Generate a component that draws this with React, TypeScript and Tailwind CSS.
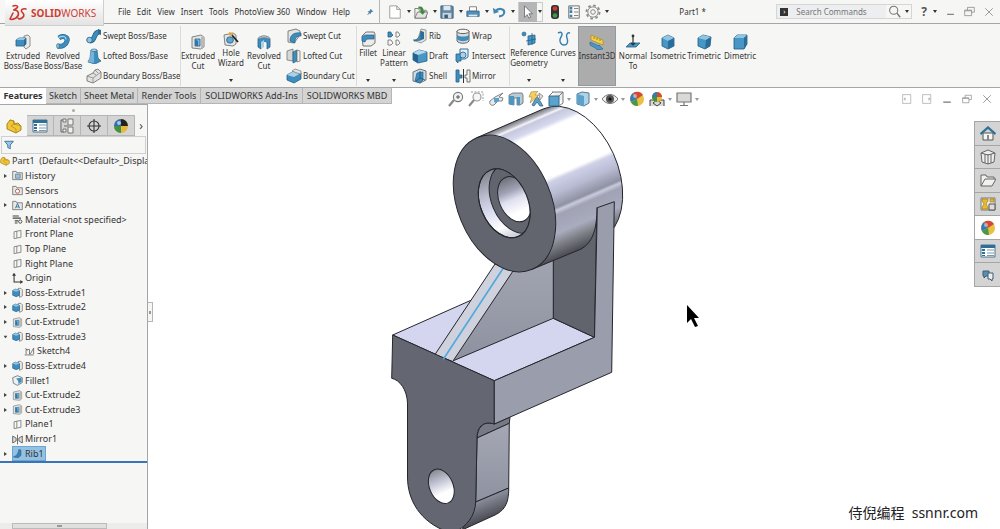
import type { ReactNode } from "react";

const ICONS: Record<string, ReactNode> = {
  extrude: (
    <>
      <path d="M9 2l4-1 2 2v9l-4 3-2-2z" fill="#e9e9e7" stroke="#777" strokeWidth=".8" />
      <path d="M1 6l3-2h7v6l-2 2H1z" fill="#3f8dbd" stroke="#24608a" strokeWidth=".8" />
      <path d="M1 6l3-2h7L9 6z" fill="#8fc4e2" />
      <path d="M9 6v6l2-2V4z" fill="#2b6d9a" />
    </>
  ),
  revolve: (
    <>
      <path d="M4 4c4-3 9-1 8 3s-5 6-9 5" fill="none" stroke="#22618c" strokeWidth="5" />
      <path d="M4 4c4-3 9-1 8 3s-5 6-9 5" fill="none" stroke="#3f8dbd" strokeWidth="3.8" />
      <path d="M4 3.4c4-2 7-1 7 2" fill="none" stroke="#a5d1ea" strokeWidth="1.2" />
      <ellipse cx="3" cy="12" rx="1.4" ry="2.4" fill="#8fc4e2" stroke="#22618c" strokeWidth=".6" />
    </>
  ),
  sweep: (
    <>
      <path d="M4 13c6 0 3-9 9-9" fill="none" stroke="#1f5a85" strokeWidth="5" />
      <path d="M4 13c6 0 3-9 9-9" fill="none" stroke="#3f8dbd" strokeWidth="3.6" />
      <circle cx="3.5" cy="12" r="2.8" fill="#8fc4e2" stroke="#1f5a85" strokeWidth=".8" />
      <path d="M12 1l3 1v5l-3-1z" fill="#2b6d9a" />
    </>
  ),
  loft: (
    <>
      <path d="M5 2h6l1 8 3 3-6 3-7-2 2-4z" fill="#3f8dbd" stroke="#24608a" strokeWidth=".7" />
      <path d="M5 2h3v13l-6-1 2-4z" fill="#76b3d6" />
      <ellipse cx="8" cy="2.3" rx="3" ry="1.3" fill="#a9d2e9" stroke="#24608a" strokeWidth=".6" />
    </>
  ),
  boundary: (
    <>
      <path d="M1 8l6-3 2-3 3-1 3 3v6l-8 5-6-2z" fill="#e2e2e0" stroke="#777" strokeWidth=".9" />
      <path d="M1 8l6 2 8-6M7 10v5M7 5l3 2M9 2l3 3" fill="none" stroke="#888" strokeWidth=".8" />
    </>
  ),
  cut: (
    <>
      <path d="M2 3l9-2 3 2v10l-3 2-9-1z" fill="#e4e4e2" stroke="#777" strokeWidth=".9" />
      <path d="M11 3l3-1v11l-3 2z" fill="#b9b9b7" />
      <path d="M5 5h5v7H5z" fill="#7db9dc" stroke="#24608a" strokeWidth=".8" />
      <path d="M5 5l3 2v5H5z" fill="#2e78a8" />
    </>
  ),
  hole: (
    <>
      <path d="M1 4l9-2 3 2v9l-3 2-8-1z" fill="#e4e4e2" stroke="#777" strokeWidth=".9" />
      <ellipse cx="7" cy="9" rx="3.4" ry="3.2" fill="#5fa8d1" stroke="#24608a" strokeWidth=".8" />
      <path d="M8 3l7 8" stroke="#222" strokeWidth="1.8" />
      <path d="M6 1l4 1-1 3-3-1z" fill="#e9a53a" />
    </>
  ),
  revcut: (
    <>
      <path d="M2 5c1-4 11-4 12 0v8l-3 2V9c0-2-5-2-6 0v6l-3-2z" fill="#3f8dbd" stroke="#24608a" strokeWidth=".8" />
      <path d="M2 5c1-4 11-4 12 0-3-2-9-2-12 0z" fill="#e6e6e4" stroke="#888" strokeWidth=".7" />
      <path d="M5 15V8l3-2v7z" fill="#a9d2e9" />
    </>
  ),
  sweptcut: (
    <>
      <path d="M2 3l8-2 4 2v4l-6 8-6-1z" fill="#e4e4e2" stroke="#777" strokeWidth=".9" />
      <path d="M4 13c0-6 4-9 11-8v3c-5 0-6 2-6 7z" fill="#3f8dbd" stroke="#24608a" strokeWidth=".7" />
    </>
  ),
  loftcut: (
    <>
      <path d="M1 3l6-2v12l-6-1z" fill="#d7d7d5" stroke="#777" strokeWidth=".8" />
      <path d="M7 4l4-2v11l-4 2z" fill="#3f8dbd" stroke="#24608a" strokeWidth=".7" />
      <path d="M11 2l3 1v10l-3 1z" fill="#efefed" stroke="#777" strokeWidth=".8" />
    </>
  ),
  boundcut: (
    <>
      <path d="M1 7l7-4 7 2v6l-7 4-7-3z" fill="#3f8dbd" stroke="#24608a" strokeWidth=".8" />
      <path d="M1 7l7-4 7 2-7 4z" fill="#a9d2e9" />
      <path d="M6 3l3-2 6 2v3l-4-1z" fill="#e4e4e2" stroke="#777" strokeWidth=".7" />
    </>
  ),
  fillet: (
    <>
      <path d="M2 5l4-4h8l1 2v9l-4 3H3z" fill="#ecece9" stroke="#666" strokeWidth=".9" />
      <path d="M2 8c0-3 2-4 4-4h8v4H9c-3 0-3 1-4 3l-3-1z" fill="#3f8dbd" stroke="#24608a" strokeWidth=".7" />
    </>
  ),
  pattern: (
    <>
      <path d="M2 1h3v1l2 2-2 2H2z" fill="#3f8dbd" stroke="#24608a" strokeWidth=".8" />
      <path d="M10 1h2l2 3-2 2h-2zM2 9h3l2 3-2 2H2zM10 9h2l2 3-2 2h-2z" fill="#f8f8f7" stroke="#777" strokeWidth=".9" />
    </>
  ),
  rib: (
    <>
      <path d="M9 1l5 1v10l-5 3-8-3 5-1z" fill="#e1e1df" stroke="#888" strokeWidth=".8" />
      <path d="M9 3v9l-7 1c4-2 6-4 7-10z" fill="#3f8dbd" stroke="#24608a" strokeWidth=".7" />
      <path d="M9 3l3 1v7l-3 1z" fill="#2b6d9a" />
    </>
  ),
  draft: (
    <>
      <path d="M1 5l6-3 8 2v9l-9 2-5-3z" fill="#4796c4" stroke="#24608a" strokeWidth=".8" />
      <path d="M1 5l6-3 8 2-9 3z" fill="#b5d8ec" />
      <path d="M1 5l5 2v8l-5-3z" fill="#26648f" />
    </>
  ),
  shell: (
    <>
      <path d="M1 4l7-3 6 2v9l-6 3-7-2z" fill="#c9dbe6" stroke="#666" strokeWidth=".9" />
      <path d="M5 5l6-1v8l-3 3-5-2z" fill="#3f8dbd" stroke="#24608a" strokeWidth=".7" />
      <path d="M8 3v7l5 2M8 10l-4 3" stroke="#1f4f72" strokeWidth=".8" fill="none" />
    </>
  ),
  wrap: (
    <>
      <path d="M2 3v10c2 3 10 3 12 0V3z" fill="#dcdcda" stroke="#555" strokeWidth=".9" />
      <path d="M2 7c3 2 9 2 12 0v4c-3 3-9 3-12 0z" fill="#3f8dbd" />
      <ellipse cx="8" cy="3.4" rx="6" ry="2.2" fill="#f3f3f1" stroke="#555" strokeWidth=".9" />
    </>
  ),
  intersect: (
    <>
      <path d="M5 1h8v8l-3 2H5z" fill="#e8f1f7" stroke="#2f6f9b" strokeWidth="1" />
      <path d="M1 6h5v7H3v2l-2-2z" fill="#4796c4" stroke="#24608a" strokeWidth=".8" />
      <circle cx="8" cy="7" r="3" fill="#a9d2e9" stroke="#24608a" strokeWidth=".8" />
    </>
  ),
  mirror: (
    <>
      <path d="M1 2h3v5h3v3H4v4H1z" fill="#3f8dbd" stroke="#24608a" strokeWidth=".8" />
      <path d="M8.500 1v14" stroke="#333" strokeWidth="1" />
      <path d="M15 2h-3v5h-2v3h2v4h3z" fill="#f4f4f2" stroke="#666" strokeWidth=".9" />
    </>
  ),
  refgeo: (
    <>
      <path d="M7 5l7-1v8l-7 2z" fill="#4796c4" stroke="#24608a" strokeWidth=".8" />
      <path d="M11 2v12M5 10l10-2" stroke="#24608a" strokeWidth=".8" />
      <circle cx="3" cy="3" r="2" fill="#3f8dbd" stroke="#24608a" strokeWidth=".6" />
    </>
  ),
  curves: <path d="M3 2c4-2 5 1 3 4s-1 8 3 8 4-4 3-7 0-6 3-5" fill="none" stroke="#3580b0" strokeWidth="1.4" />,
  instant: (
    <>
      <path d="M2 1l12 5v5L2 6z" fill="#f2d14b" stroke="#a98b1d" strokeWidth=".7" />
      <path d="M5 3v2M8 4v2M11 5v2" stroke="#8a6d10" strokeWidth=".8" />
      <path d="M1 8l9 4v-1l4 4-6 1v-1L1 11z" fill="#4b97c8" stroke="#24608a" strokeWidth=".6" />
    </>
  ),
  normal: (
    <>
      <path d="M1 13l4-4h10l-4 4z" fill="#4796c4" stroke="#24608a" strokeWidth=".8" />
      <path d="M8 2v9M6 9l2 2 2-2" stroke="#333" strokeWidth="1.2" fill="none" />
      <circle cx="8" cy="2" r="1.4" fill="#333" />
    </>
  ),
  iso: (
    <>
      <path d="M8 1l6 3v8l-6 3-6-3V4z" fill="#4796c4" stroke="#1f5a85" strokeWidth=".8" />
      <path d="M8 1l6 3-6 3-6-3z" fill="#8fc4e2" />
      <path d="M8 7l6-3v8l-6 3z" fill="#2b6d9a" />
    </>
  ),
  tri: (
    <>
      <path d="M7 1l8 2-1 9-5 3-7-3V4z" fill="#4796c4" stroke="#1f5a85" strokeWidth=".8" />
      <path d="M7 1l8 2-5 3-8-2z" fill="#8fc4e2" />
      <path d="M10 6l5-3-1 9-5 3z" fill="#2b6d9a" />
    </>
  ),
  di: (
    <>
      <path d="M5 1h10v9l-3 5H2V4z" fill="#4796c4" stroke="#1f5a85" strokeWidth=".8" />
      <path d="M5 1h10l-3 3H2z" fill="#8fc4e2" />
      <path d="M12 4l3-3v9l-3 5z" fill="#2b6d9a" />
    </>
  ),
  doc: <path d="M2 1h8l4 4v10H2zM10 1v4h4" fill="#fff" stroke="#8a8a8a" strokeWidth=".9" />,
  open: (
    <>
      <path d="M1 15V4h4l1 2h8v9z" fill="#f0f0ee" stroke="#777" />
      <path d="M1 15l3-7h12l-3 7z" fill="#e3e3e1" stroke="#777" />
      <path d="M5 2c4-1 6 1 6 5h2l-3 4-4-4h2c0-2-1-3-3-3z" fill="#3f8a3c" />
    </>
  ),
  save: (
    <>
      <path d="M1 1h13l1 1v13H1z" fill="#5f8bab" stroke="#3c5a70" />
      <path d="M4 1h8v5H4z" fill="#dfe7ec" />
      <path d="M3 9h10v6H3z" fill="#c9d4dc" />
      <path d="M5 11h4v4H5z" fill="#3c5a70" />
    </>
  ),
  print: (
    <>
      <path d="M4 2h8v5H4z" fill="#fff" stroke="#777" />
      <path d="M1 7h14v6H1z" fill="#4c90bd" stroke="#3a6788" />
      <path d="M3 11h10v2H3z" fill="#dfe9f0" />
    </>
  ),
  undo: (
    <>
      <path d="M4 7c3-4 10-3 10 1 0 3-3 5-6 5" fill="none" stroke="#4186b3" strokeWidth="2.4" />
      <path d="M1 3l1 7 6-2z" fill="#4186b3" />
    </>
  ),
  select: <path d="M4 1l9 9H9l2 4-2 1-2-4-3 3z" fill="#fff" stroke="#555" strokeWidth=".8" />,
  traffic: (
    <>
      <rect x="4" y="1" width="8" height="14" rx="3" fill="#333" />
      <circle cx="8" cy="4.500" r="2.3" fill="#d03b2f" />
      <circle cx="8" cy="11.500" r="2.3" fill="#3f9a46" />
    </>
  ),
  options: (
    <>
      <path d="M2 1h12v14H2z" fill="#f7f7f5" stroke="#666" />
      <path d="M3 2h3v3H3zM3 6h3v3H3zM3 11h3v3H3z" fill="#3f7ea8" />
      <path d="M8 4h5M8 8h5M8 12h5" stroke="#777" />
    </>
  ),
  gear: (
    <>
      <circle cx="8" cy="8" r="6.6" fill="none" stroke="#8a8a8a" strokeWidth="1.8" strokeDasharray="2.6 2.58" />
      <circle cx="8" cy="8" r="5.2" fill="#f6f6f4" stroke="#8a8a8a" />
      <circle cx="8" cy="8" r="2.3" fill="none" stroke="#8a8a8a" />
    </>
  ),
  pin: <path d="M9 2l5 5-2 0-3 3 0 2-2-2-4 4 3-5-2-2h2l3-3z" fill="#3f7fb0" stroke="#2d6591" strokeWidth=".6" />,
  part: (
    <>
      <path d="M1 6l3-4 4 1v3l4-1 3 3v4l-5 3-9-4z" fill="#efc63b" stroke="#a37d10" strokeWidth=".9" />
      <path d="M4 2l4 1v3L5 8M8 6l7 2M5 8l5 3v4" fill="none" stroke="#b98f18" strokeWidth=".8" />
    </>
  ),
  props: (
    <>
      <path d="M1 2h14v12H1z" fill="#fff" stroke="#4c7590" />
      <path d="M1 2h14v3H1z" fill="#2f6f97" />
      <path d="M2 6h3v2H2zM2 9h3v2H2zM2 12h3v1H2z" fill="#2f6f97" />
      <path d="M7 7h7M7 10h7M7 12.5h7" stroke="#7b98aa" />
    </>
  ),
  config: (
    <>
      <path d="M5 2H2v12h3M5 8h4" fill="none" stroke="#666" />
      <path d="M4 1h3v3H4zM9 1h5v6H9zM4 11h3v3H4zM9 9h5v6H9z" fill="#efefed" stroke="#777" />
    </>
  ),
  target: (
    <>
      <circle cx="8" cy="8" r="5" fill="none" stroke="#333" strokeWidth="1.1" />
      <path d="M8 1v14M1 8h14" stroke="#333" strokeWidth="1.1" />
    </>
  ),
  ball: (
    <>
      <circle cx="8" cy="8" r="7" fill="#e9c03f" />
      <path d="M8 8L4 2a7 7 0 0 0-2 9z" fill="#3b78b4" />
      <path d="M8 8L4 2a7 7 0 0 1 10 2z" fill="#d24a37" />
      <path d="M8 8l-6 3a7 7 0 0 0 7 4z" fill="#47984b" />
      <circle cx="6" cy="5" r="2" fill="#fff" opacity=".45" />
    </>
  ),
  darkBall: (
    <>
      <circle cx="8" cy="8" r="7" fill="#e5b93a" />
      <path d="M8 8V1a7 7 0 0 0-7 7z" fill="#2c6fb4" />
      <path d="M8 8V1a7 7 0 0 1 7 7z" fill="#222" />
      <path d="M8 8H1a7 7 0 0 0 7 7z" fill="#3f9146" />
      <circle cx="6" cy="5" r="2" fill="#fff" opacity=".6" />
    </>
  ),
  scene: (
    <>
      <path d="M1 15V9h14v6M4 12l4-3 4 3-4 3z" fill="#d8d8d6" stroke="#444" />
      <circle cx="8" cy="6" r="5" fill="#e5b93a" />
      <path d="M8 6V1a5 5 0 0 0-5 5z" fill="#3578b4" />
      <path d="M8 6V1a5 5 0 0 1 5 5z" fill="#cf4b36" />
      <path d="M8 6H3a5 5 0 0 0 5 5z" fill="#3f9146" />
    </>
  ),
  monitor: <path d="M1 2h14v9H1zM8 11v3M4 14.5h8" fill="#d9d9d7" stroke="#777" strokeWidth="1.2" />,
  filter: <path d="M1 2h14l-5 6v6l-4-2V8z" fill="#9cc7df" stroke="#2f6f97" strokeWidth="1.4" />,
  folder: (
    <>
      <path d="M1 14V2h5l1 2h8v10z" fill="#e9e9e7" stroke="#666" strokeWidth="1.1" />
      <path d="M5 6h7v6H5z" fill="#9cc1d8" stroke="#4b6f88" strokeWidth=".9" />
    </>
  ),
  sensor: (
    <>
      <path d="M1 14V2h5l1 2h8v10z" fill="#e9e9e7" stroke="#666" strokeWidth="1.1" />
      <circle cx="8" cy="9" r="3" fill="#fff" stroke="#a3453b" strokeWidth="1.2" />
    </>
  ),
  note: (
    <>
      <path d="M1 14V2h5l1 2h8v10z" fill="#e9e9e7" stroke="#666" strokeWidth="1.1" />
      <path d="M5 12l3-7 3 7M6 10h4" fill="none" stroke="#2f6f97" strokeWidth="1.3" />
    </>
  ),
  material: (
    <>
      <path d="M1 3h9M1 6h12M4 10h5M4 13h4" stroke="#444" strokeWidth="1.6" />
      <circle cx="12" cy="11" r="2.4" fill="none" stroke="#444" strokeWidth="1.3" />
    </>
  ),
  plane: <path d="M3 4l10-2v10L3 14zM7 3v10" fill="none" stroke="#777" strokeWidth="1.2" />,
  origin: <path d="M3 2v11h11M1 4l2-3 2 3M12 11l3 2-3 2" fill="none" stroke="#333" strokeWidth="1.5" />,
  boss: (
    <>
      <path d="M9 2h4l2 2v9l-4 2z" fill="#eee" stroke="#666" />
      <path d="M1 5l4-2 6 2v7l-5 2-5-2z" fill="#3f8dbd" stroke="#1f5a85" strokeWidth=".9" />
      <path d="M1 5l4-2 6 2-5 2z" fill="#8fc4e2" />
    </>
  ),
  sketch: (
    <>
      <path d="M1 13h13M3 12V5h5v7M9 12l5-9v9" fill="none" stroke="#666" strokeWidth="1.2" />
      <path d="M2 3l3 4" stroke="#666" />
    </>
  ),
  filletNode: (
    <>
      <path d="M1 4l7-3 7 3v7l-7 4-6-3z" fill="#eef1f3" stroke="#555" />
      <path d="M6 5l8-1v6l-5 3c1-3 0-5-3-8z" fill="#3f8dbd" />
    </>
  ),
  mirrorNode: <path d="M1 3l5 3v4l-5 3zM8 1v14M15 3l-5 3v4l5 3z" fill="#ddd" stroke="#444" strokeWidth="1.1" />,
  ribNode: <path d="M2 13c5-2 7-5 8-11l3 1v8l-4 3z" fill="#3c7fae" stroke="#2b5f86" strokeWidth=".8" />,
  zoomFit: (
    <>
      <circle cx="10" cy="6" r="4.6" fill="#eef3f6" stroke="#777" strokeWidth="1.1" />
      <path d="M6 9l-5 6" stroke="#888" strokeWidth="2.2" />
      <path d="M8 6h4M10 4v4" stroke="#555" />
    </>
  ),
  zoomArea: (
    <>
      <path d="M3 1h12v9" fill="none" stroke="#999" strokeDasharray="2 1.4" />
      <circle cx="9" cy="6" r="4" fill="#f4f6f7" stroke="#999" strokeWidth="1.1" />
      <path d="M6 9l-5 6" stroke="#888" strokeWidth="2" />
    </>
  ),
  prevView: (
    <>
      <path d="M15 2l-8 4-5 4c-1 3 1 5 4 4l4-4h4l1-3-4-1z" fill="#e6ebee" stroke="#777" strokeWidth=".9" />
      <path d="M6 7h5v3l-3 2-2-1z" fill="#5ba0c8" />
    </>
  ),
  section: (
    <>
      <path d="M1 4l4-2h9l1 2v8l-3 2H9V7H6v7l-5-1z" fill="#b9cbd6" stroke="#666" strokeWidth=".8" />
      <path d="M1 5h5v9l-5-1zM9 6h3v8H9z" fill="#4b97c4" />
    </>
  ),
  dynamic: (
    <>
      <path d="M4 14l5-9 6 10h-3l-3-4-3 4z" fill="#5ba0c8" stroke="#36678a" strokeWidth=".8" />
      <path d="M3 1l7-1-3 4h4L2 12l2-6H1z" fill="#f3cf63" stroke="#a88634" strokeWidth=".6" />
      <path d="M11 2l4 3-3 4z" fill="#ddd" stroke="#777" strokeWidth=".7" />
    </>
  ),
  orient: (
    <>
      <path d="M4 1h11v11" fill="#eee" stroke="#777" />
      <path d="M1 5h10v10H1z" fill="#5ba3cd" stroke="#35698d" />
      <path d="M11 5l4-4M1 5l4-4M11 15l4-3" stroke="#777" />
    </>
  ),
  display: (
    <>
      <path d="M2 3l5-2 7 1v10l-5 3-7-2z" fill="#aed2e7" stroke="#55788f" />
      <path d="M2 3l7 2v10l-7-2z" fill="#5ba3cd" />
    </>
  ),
  eye: (
    <>
      <path d="M0 8c4-6 12-6 16 0-4 6-12 6-16 0z" fill="#eee" stroke="#777" />
      <circle cx="8" cy="8" r="4" fill="#555" />
      <circle cx="8" cy="8" r="1.6" fill="#111" />
    </>
  ),
  home: (
    <>
      <path d="M3 8h10v7H3z" fill="#f5f5f3" stroke="#555" />
      <path d="M0 8l8-7 8 7-1 2-7-6-7 6z" fill="#2f7096" />
      <path d="M7 10h2v5H7z" fill="#888" />
    </>
  ),
  library: (
    <>
      <path d="M1 4l7-3 7 3-1 9-6 2-6-2z" fill="#eee" stroke="#666" />
      <path d="M5 5v9M8 5v10M11 5v9M1 4l7 2 7-2" fill="none" stroke="#666" />
    </>
  ),
  openGray: <path d="M1 14V3h5l1 2h7v2M1 14l4-7h11l-4 7z" fill="#f1f1ef" stroke="#666" />,
  palette: (
    <>
      <path d="M1 2h14v12H1z" fill="#eee" stroke="#777" />
      <path d="M2 3h6v2L6 8l2 3v2H2v-2l2-3-2-3zM10 3h4v3h-4z" fill="#e8b931" stroke="#94720f" strokeWidth=".6" />
      <path d="M9 8h6v6H9z" fill="#ddd" stroke="#555" />
    </>
  ),
  forum: (
    <>
      <path d="M3 4h6v5H6l-2 2V9H3z" fill="#5c8fae" stroke="#3b5f78" />
      <path d="M8 6h5v6h-1v2l-2-2H8z" fill="#eee" stroke="#3b5f78" />
    </>
  ),
  paneLeft: <path d="M1 1h13v14H1zM5 6l-2 2 2 2z" fill="none" stroke="#999" />,
  paneRight: <path d="M1 1h13v14H1zM11 6l2 2-2 2z" fill="none" stroke="#999" />,
  minimize: <path d="M2 13h12" stroke="#777" strokeWidth="2" />,
  restore: <path d="M5 6V2h10v7h-4M1 6h10v8H1zM1 7h10" fill="none" stroke="#888" strokeWidth="1.1" />,
  close: <path d="M2 2l12 12M14 2L2 14" stroke="#888" strokeWidth="1.3" />,
  search: (
    <>
      <circle cx="7" cy="6.500" r="5" fill="none" stroke="#777" strokeWidth="1.3" />
      <path d="M11 10l4 5" stroke="#777" strokeWidth="1.8" />
    </>
  ),
};

const Icon = ({ name, className = "size-4" }: { name: string; className?: string }) => (
  <svg viewBox="0 0 16 16" className={`${className} shrink-0`} aria-hidden="true">
    {ICONS[name]}
  </svg>
);

const Caret = ({ className = "" }: { className?: string }) => (
  <svg viewBox="0 0 4 3" className={`h-[3px] w-1 shrink-0 ${className}`} aria-hidden="true">
    <path d="M0 0h4L2 3z" fill="#333" />
  </svg>
);

const MENUS = ["File", "Edit", "View", "Insert", "Tools", "PhotoView 360", "Window", "Help"];

const TitleBar = () => (
  <header className="flex h-6 items-center border-b border-[#a5a5a5] bg-[#f6f6f4] pl-[5px]">
    <div className="z-10 flex h-[26px] w-[99px] shrink-0 items-center gap-[2px] self-start border-r border-b border-[#cfcfcf] bg-linear-to-b from-white to-[#e3e3e3] pl-1">
      <svg viewBox="0 0 20 18" className="h-[18px] w-5 shrink-0" role="img" aria-label="3DS">
        <g fill="none" stroke="#c8382d" strokeWidth="1.6" strokeLinecap="round">
          <path d="M4 2c3-1 6 0 4 2L5 6" />
          <path d="M5 6c5 0 6 5 2 8-2 1-5 2-6 1l3-6" />
          <path d="M17 5c-3-1-6 1-4 3s3 4 0 6-4 0-4 0" />
        </g>
      </svg>
      <span className="text-[10px] leading-none font-bold text-[#cf3d32]">
        SOLID<span className="font-normal">WORKS</span>
      </span>
    </div>
    <nav className="ml-[14px] flex w-[232px] shrink-0 items-center justify-between">
      {MENUS.map((menu) => (
        <button key={menu} type="button" className="whitespace-nowrap">
          {menu}
        </button>
      ))}
    </nav>
    <button type="button" aria-label="Pin" className="ml-4">
      <Icon name="pin" className="size-2" />
    </button>
    <div className="ml-[5px] h-6 w-px shrink-0 bg-[#b5b5b5]" />
    <div className="ml-2 flex shrink-0 items-center gap-[3px]">
      {["doc", "open", "save", "print", "undo"].map((name) => (
        <button key={name} type="button" aria-label={name} className="flex items-center gap-[5px]">
          <Icon name={name} className="size-[14px]" />
          <Caret />
        </button>
      ))}
      <button type="button" aria-label="select" className="flex h-5 w-[25px] items-center border border-[#ccc]">
        <span className="flex h-5 w-[18px] items-center justify-center bg-[#b4b5b7]">
          <Icon name="select" className="size-[14px]" />
        </span>
        <Caret className="ml-px" />
      </button>
    </div>
    <div className="ml-1 flex shrink-0 items-center gap-1">
      <button type="button" aria-label="Rebuild">
        <Icon name="traffic" />
      </button>
      <button type="button" aria-label="File properties">
        <Icon name="options" className="size-[14px]" />
      </button>
      <button type="button" aria-label="Options" className="flex items-center gap-1">
        <Icon name="gear" />
        <Caret />
      </button>
    </div>
    <div className="flex-1 text-center">Part1 *</div>
    <div className="flex h-[15px] w-[136px] shrink-0 items-center border border-[#d5d5d5] bg-[#eceeef]">
      <span className="mr-2 ml-[3px] flex size-2 items-center justify-center bg-[#333] text-[7px] leading-none text-white">›</span>
      <input
        aria-label="Search Commands"
        placeholder="Search Commands"
        className="h-3 min-w-0 flex-1 outline-none placeholder:text-[#777]"
      />
      <button type="button" aria-label="Search" className="flex h-full items-center gap-1 bg-[#f6f6f4] px-[2px]">
        <Icon name="search" className="size-[13px]" />
        <Caret />
      </button>
    </div>
    <div className="mr-[6px] ml-[9px] flex shrink-0 items-center gap-[9px]">
      <button type="button" aria-label="Help menu" className="flex items-center gap-[6px] text-xs font-bold text-[#555]">
        ?<Caret />
      </button>
      <button type="button" aria-label="Minimize">
        <Icon name="minimize" className="size-[9px]" />
      </button>
      <button type="button" aria-label="Restore">
        <Icon name="restore" className="size-[11px]" />
      </button>
      <button type="button" aria-label="Close">
        <Icon name="close" className="size-[10px]" />
      </button>
    </div>
  </header>
);

type BigToolProps = { icon: string; lines: string[]; width: string; menu?: boolean; active?: boolean };

const BigTool = ({ icon, lines, width, menu, active }: BigToolProps) => (
  <button
    type="button"
    className={`flex h-[60px] shrink-0 flex-col items-center self-center ${width} ${menu ? "pt-[5px]" : "pt-2"} ${
      active ? "bg-[#acacac] outline -outline-offset-1 outline-[#8f9aa3]" : ""
    }`}
  >
    <Icon name={icon} />
    <span className="mt-px flex flex-col leading-[10px] whitespace-nowrap">
      {lines.map((line) => (
        <span key={line}>{line}</span>
      ))}
    </span>
    {menu && <Caret className="mt-auto mb-1" />}
  </button>
);

const SmallTools = ({ items, width }: { items: string[][]; width: string }) => (
  <div className={`flex h-[60px] shrink-0 flex-col self-center ${width}`}>
    {items.map(([icon, label]) => (
      <button key={label} type="button" className="flex h-5 items-center gap-px whitespace-nowrap">
        <Icon name={icon} />
        {label}
      </button>
    ))}
  </div>
);

const Divider = () => <div className="h-[60px] w-px shrink-0 self-center bg-[#dcdcdc]" />;

const Ribbon = () => (
  <div className="flex h-16 border-b border-[#a5a5a5] bg-[#f6f6f4] pl-[3px]">
    <BigTool icon="extrude" lines={["Extruded", "Boss/Base"]} width="w-10" />
    <BigTool icon="revolve" lines={["Revolved", "Boss/Base"]} width="w-10" />
    <SmallTools
      width="w-[94px] ml-[3px]"
      items={[
        ["sweep", "Swept Boss/Base"],
        ["loft", "Lofted Boss/Base"],
        ["boundary", "Boundary Boss/Base"],
      ]}
    />
    <Divider />
    <BigTool icon="cut" lines={["Extruded", "Cut"]} width="w-[34px]" />
    <BigTool icon="hole" lines={["Hole", "Wizard"]} width="w-8" menu />
    <BigTool icon="revcut" lines={["Revolved", "Cut"]} width="w-[34px]" />
    <SmallTools
      width="w-[70px] ml-[5px]"
      items={[
        ["sweptcut", "Swept Cut"],
        ["loftcut", "Lofted Cut"],
        ["boundcut", "Boundary Cut"],
      ]}
    />
    <Divider />
    <BigTool icon="fillet" lines={["Fillet"]} width="w-[22px]" menu />
    <BigTool icon="pattern" lines={["Linear", "Pattern"]} width="w-[30px]" menu />
    <SmallTools
      width="w-[43px] ml-[3px]"
      items={[
        ["rib", "Rib"],
        ["draft", "Draft"],
        ["shell", "Shell"],
      ]}
    />
    <SmallTools
      width="w-[54px]"
      items={[
        ["wrap", "Wrap"],
        ["intersect", "Intersect"],
        ["mirror", "Mirror"],
      ]}
    />
    <Divider />
    <BigTool icon="refgeo" lines={["Reference", "Geometry"]} width="w-[38px]" menu />
    <BigTool icon="curves" lines={["Curves"]} width="w-[30px]" menu />
    <BigTool icon="instant" lines={["Instant3D"]} width="w-[38px]" active />
    <BigTool icon="normal" lines={["Normal", "To"]} width="w-[34px]" />
    <BigTool icon="iso" lines={["Isometric"]} width="w-9" />
    <BigTool icon="tri" lines={["Trimetric"]} width="w-9" />
    <BigTool icon="di" lines={["Dimetric"]} width="w-9" />
  </div>
);

const TABS = [
  { label: "Features", width: "w-[46px]", active: true },
  { label: "Sketch", width: "w-[35px]" },
  { label: "Sheet Metal", width: "w-[57px]" },
  { label: "Render Tools", width: "w-[63px]" },
  { label: "SOLIDWORKS Add-Ins", width: "w-[102px]" },
  { label: "SOLIDWORKS MBD", width: "w-[89px]" },
];

const VIEW_TOOLS = [
  { name: "zoomFit" },
  { name: "zoomArea" },
  { name: "prevView" },
  { name: "section" },
  { name: "dynamic" },
  { name: "orient", menu: true },
  { name: "display", menu: true },
  { name: "eye", menu: true },
  { name: "ball" },
  { name: "scene", menu: true },
  { name: "monitor", menu: true },
];

const TabRow = () => (
  <div className="relative z-10 flex h-4 items-start">
    <div role="tablist" className="flex h-4 shrink-0 text-[9px]">
      {TABS.map(({ label, width, active }) => (
        <button
          key={label}
          type="button"
          role="tab"
          aria-selected={!!active}
          className={`flex shrink-0 items-center justify-center leading-3 whitespace-nowrap ${width} ${
            active ? "bg-white font-bold" : "border-r border-b border-[#b5b5b5] bg-[#d4d4d4]"
          }`}
        >
          {label}
        </button>
      ))}
    </div>
    <div className="ml-14 flex h-[22px] shrink-0 items-center gap-1">
      {VIEW_TOOLS.map(({ name, menu }) => (
        <button key={name} type="button" aria-label={name} className="flex items-center gap-[3px]">
          <Icon name={name} />
          {menu && <Caret className="opacity-50" />}
        </button>
      ))}
    </div>
    <div className="mr-2 ml-auto flex h-[22px] shrink-0 items-center gap-[10px]">
      {["paneLeft", "paneRight", "minimize", "restore", "close"].map((name) => (
        <button key={name} type="button" aria-label={name}>
          <Icon name={name} className="size-[10px]" />
        </button>
      ))}
    </div>
  </div>
);

type TreeNode = { icon: string; label: string; arrow?: "closed" | "open"; child?: boolean; selected?: boolean };

const TREE: TreeNode[] = [
  { icon: "folder", label: "History", arrow: "closed" },
  { icon: "sensor", label: "Sensors" },
  { icon: "note", label: "Annotations", arrow: "closed" },
  { icon: "material", label: "Material <not specified>" },
  { icon: "plane", label: "Front Plane" },
  { icon: "plane", label: "Top Plane" },
  { icon: "plane", label: "Right Plane" },
  { icon: "origin", label: "Origin" },
  { icon: "boss", label: "Boss-Extrude1", arrow: "closed" },
  { icon: "boss", label: "Boss-Extrude2", arrow: "closed" },
  { icon: "cut", label: "Cut-Extrude1", arrow: "closed" },
  { icon: "boss", label: "Boss-Extrude3", arrow: "open" },
  { icon: "sketch", label: "Sketch4", child: true },
  { icon: "boss", label: "Boss-Extrude4", arrow: "closed" },
  { icon: "filletNode", label: "Fillet1" },
  { icon: "cut", label: "Cut-Extrude2", arrow: "closed" },
  { icon: "cut", label: "Cut-Extrude3", arrow: "closed" },
  { icon: "plane", label: "Plane1" },
  { icon: "mirrorNode", label: "Mirror1" },
  { icon: "ribNode", label: "Rib1", arrow: "closed", selected: true },
];

const FeatureTree = () => (
  <aside className="flex w-[148px] shrink-0 flex-col overflow-hidden border-t border-r border-[#a5a5a5] bg-[#f6f6f4] text-[9px]">
    <div className="flex h-[10px] shrink-0 items-center justify-center">
      <span className="size-[3px] rounded-full bg-[#aaa]" />
    </div>
    <div role="tablist" className="flex h-[21px] shrink-0">
      {["part", "props", "config", "target", "darkBall"].map((name, i) => (
        <button
          key={name}
          type="button"
          role="tab"
          aria-selected={i === 0}
          aria-label={name}
          className={`flex w-[27px] items-center justify-center ${
            i === 0 ? "bg-[#f6f6f4]" : "border border-l-0 border-[#b5b5b5] bg-[#d4d4d4]"
          }`}
        >
          <Icon name={name} />
        </button>
      ))}
      <button type="button" aria-label="More tabs" className="flex-1 text-xs leading-none text-[#444]">
        ›
      </button>
    </div>
    <div className="mx-px flex h-[18px] shrink-0 items-center border border-[#cfcfcf] pl-[2px]">
      <Icon name="filter" className="size-[10px]" />
      <input aria-label="Filter" className="h-3 min-w-0 flex-1 outline-none" />
    </div>
    <ul className="grid h-[309px] shrink-0 auto-rows-fr border-b-2 border-[#3a74b8] leading-3">
      <li className="flex items-center gap-[2px] whitespace-pre">
        <Icon name="part" className="size-[10px]" />
        {"Part1  (Default<<Default>_Display"}
      </li>
      {TREE.map(({ icon, label, arrow, child, selected }) => (
        <li key={label} className="flex items-center whitespace-nowrap">
          <span className={`flex shrink-0 pl-1 ${child ? "w-6" : "w-3"}`}>
            {arrow && (
              <svg viewBox="0 0 3 4" className={`h-1 w-[3px] ${arrow === "open" ? "rotate-90" : ""}`}>
                <path d="M0 0l3 2-3 2z" fill="#444" />
              </svg>
            )}
          </span>
          <button
            type="button"
            className={`flex h-full items-center gap-[2px] pr-[2px] ${selected ? "bg-[#93c1e3] outline -outline-offset-1 outline-[#6ba6d2]" : ""}`}
          >
            <Icon name={icon} className="size-[11px]" />
            {label}
          </button>
        </li>
      ))}
    </ul>
    <div className="mt-auto flex h-[6px] shrink-0 items-center bg-[#ececea]">
      <div className="ml-3 flex h-[6px] w-[95px] items-center justify-center border border-[#bbb] bg-[#e0e0de]">
        <span className="h-[2px] w-[5px] bg-[#999]" />
      </div>
    </div>
  </aside>
);

// every round face shares one projection, so the ellipses only differ in size
const Model = () => (
  <svg viewBox="148 104 826 425" className="h-full min-w-0 flex-1" role="img" aria-label="Part1 model">
    <defs>
      <linearGradient id="barrel" gradientUnits="userSpaceOnUse" x1="476.6" y1="137.8" x2="533.3" y2="268.9">
        <stop offset="0" stopColor="#75767d" />
        <stop offset=".03" stopColor="#b9bac2" />
        <stop offset=".045" stopColor="#f4f4fa" />
        <stop offset=".06" stopColor="#c6c8de" />
        <stop offset=".11" stopColor="#d6d8ee" />
        <stop offset=".14" stopColor="#ffffff" />
        <stop offset=".46" stopColor="#ffffff" />
        <stop offset=".49" stopColor="#cdd0e6" />
        <stop offset=".58" stopColor="#b7bad0" />
        <stop offset=".67" stopColor="#8f92a2" />
        <stop offset=".69" stopColor="#c9cbdc" />
        <stop offset=".72" stopColor="#a0a3b3" />
        <stop offset=".84" stopColor="#a9abbf" />
        <stop offset=".9" stopColor="#85878f" />
        <stop offset="1" stopColor="#4c4d54" />
      </linearGradient>
      <linearGradient id="bore">
        <stop offset="0" stopColor="#80828c" />
        <stop offset=".3" stopColor="#b9bbcd" />
        <stop offset=".55" stopColor="#dcdef2" />
        <stop offset=".8" stopColor="#ffffff" />
        <stop offset="1" stopColor="#c5c7d4" />
      </linearGradient>
      <linearGradient id="hole">
        <stop offset="0" stopColor="#6d6f79" />
        <stop offset=".3" stopColor="#a0a2b4" />
        <stop offset=".5" stopColor="#dfe0f0" />
        <stop offset=".8" stopColor="#ffffff" />
      </linearGradient>
      <linearGradient id="pinHole">
        <stop offset="0" stopColor="#85878f" />
        <stop offset=".4" stopColor="#c9cbdc" />
        <stop offset=".7" stopColor="#ffffff" />
      </linearGradient>
      <linearGradient id="web" x1="0" y1="0" x2="0" y2="1">
        <stop offset="0" stopColor="#a5a8b4" />
        <stop offset="1" stopColor="#8e919f" />
      </linearGradient>
      <linearGradient id="foot" gradientUnits="userSpaceOnUse" x1="486" y1="496" x2="494" y2="516">
        <stop offset="0" stopColor="#9093a2" />
        <stop offset="1" stopColor="#4b4d54" />
      </linearGradient>
      <clipPath id="boreClip">
        <ellipse rx="36" ry="23.6" transform="translate(504.2 203.3) rotate(67.2)" />
      </clipPath>
    </defs>
    <g stroke="#24262c" strokeWidth="1" strokeLinejoin="round">
      <path d="M477 438C478 425 485 421 494.3 424L510 417 509.3 423.3z" fill="#777984" />
      <path d="M477 438l32.3-14.7-.6 64.7-33 14z" fill="url(#web)" />
      <path d="M475.7 502l33-14C509 505 503 511 495 515L462 530z" fill="url(#foot)" />
      <path d="M392.7 335L470 300.7 500 290 553.3 318.3 594.3 337.3 494.3 380.7z" fill="#d3d6ee" />
      <path d="M553.3 240L597 200 594.5 337.3 553.3 318.3z" fill="#62646d" />
      <path d="M452.7 361L505 266 553.3 240V318.3z" fill="url(#web)" />
      <path d="M435 354.5L495 264 515 268 452.7 361.5z" fill="#cfd1dc" />
      <path
        d="M392.7 335L494.3 380.7V424C485 421 477 425 477 438L475.7 502C475 516 467 526 455 532H448C420 522 407.5 500 407.5 477V403C407 390 400 380 391.7 378.3z"
        fill="#646771"
      />
      <path d="M443.3 359.3L506 264" stroke="#4da9e0" strokeWidth="1.6" />
      <path d="M476.6 137.8L543.6 108.8A71.4 46.7 67.2 0 1 614.3 227.3L597 207.7C597 230 592 244 580 249.5L532.4 269.2z" fill="url(#barrel)" />
      <ellipse rx="71.4" ry="46.7" transform="translate(504.5 203.5) rotate(67.2)" fill="#63656e" />
      <path d="M494.3 380.7L594.5 337.3 597.3 207.7 614.3 201.7 611.7 372.3 494.3 424z" fill="#9a9dac" />
      <ellipse rx="36" ry="23.6" transform="translate(504.2 203.3) rotate(67.2)" fill="url(#bore)" />
      <g clipPath="url(#boreClip)">
        <ellipse rx="36" ry="23.6" transform="translate(515 198.7) rotate(67.2)" fill="#63656e" />
        <ellipse rx="23.6" ry="15.4" transform="translate(514.5 199.2) rotate(67.2)" fill="url(#hole)" />
      </g>
      <ellipse rx="36" ry="23.6" transform="translate(504.2 203.3) rotate(67.2)" fill="none" />
      <ellipse rx="18" ry="11.8" transform="translate(441.3 486.3) rotate(67.2)" fill="url(#pinHole)" />
    </g>
    <path d="M687 305v18l4-4 4 8 3-1-4-8h5z" fill="#000" />
  </svg>
);

const TASKS = ["home", "library", "openGray", "palette", "ball", "props", "forum"];

const App = () => {
  return (
    <div className="flex h-screen min-h-[480px] flex-col overflow-hidden bg-white font-['Noto_Sans','Noto_Sans_CJK_SC',sans-serif] text-[8px] text-[#333]">
      <TitleBar />
      <Ribbon />
      <TabRow />
      <main className="flex min-h-0 flex-1">
        <FeatureTree />
        <section className="relative flex min-w-0 flex-1">
          <button
            type="button"
            aria-label="Collapse panel"
            className="absolute top-[198px] left-0 flex h-5 w-[5px] items-center justify-center border border-l-0 border-[#b5b5b5] bg-[#f6f6f4]"
          >
            <span className="h-[3px] w-[2px] bg-[#999]" />
          </button>
          <Model />
          <nav className="mt-[17px] grid h-[166px] w-[26px] shrink-0 auto-rows-fr border-t border-l border-[#a5a5a5]">
            {TASKS.map((name) => (
              <button
                key={name}
                type="button"
                aria-label={name}
                className={`flex items-center justify-center border-b border-[#a5a5a5] ${name === "ball" ? "bg-white" : "bg-[#d4d4d4]"}`}
              >
                <Icon name={name} />
              </button>
            ))}
          </nav>
          <p className="absolute right-[22px] bottom-[6px] text-[14px] leading-5 whitespace-pre text-[#222]">侍倪编程  ssnnr.com</p>
        </section>
      </main>
    </div>
  );
};

export default App;
